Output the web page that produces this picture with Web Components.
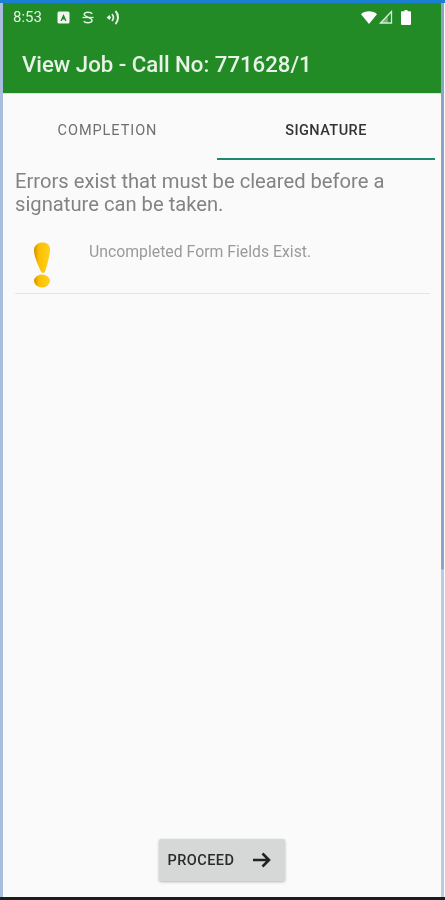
<!DOCTYPE html>
<html>
<head>
<meta charset="utf-8">
<title>View Job</title>
<style>
  html, body { margin: 0; height: 100%; background: #fafafa; }
  body { font-family: Roboto, "Liberation Sans", sans-serif; }
</style>
</head>
<body>
<job-screen>
  <status-bar slot="header" time="8:53"></status-bar>
  <app-bar slot="header" title="View Job - Call No: 771628/1"></app-bar>
  <tab-strip>
    <tab-item first>COMPLETION</tab-item>
    <tab-item active>SIGNATURE</tab-item>
  </tab-strip>
  <error-panel message="Errors exist that must be cleared before a signature can be taken.">
    <error-row>Uncompleted Form Fields Exist.</error-row>
  </error-panel>
  <proceed-button slot="footer">PROCEED</proceed-button>
</job-screen>

<script>
  class JobScreen extends HTMLElement {
    constructor() {
      super();
      this.attachShadow({mode: 'open'}).innerHTML = `
        <style>
          :host { display: flex; flex-direction: column; width: 445px; height: 900px; overflow: hidden; }
          .top { height: 3px; background: #1b7fd4; flex: none; }
          .frame { flex: 1 1 auto; display: flex; min-height: 0; }
          .left { width: 3px; background: #a9bedf; flex: none; }
          .right { width: 3px; margin-right: 1px; flex: none; background: linear-gradient(#8fa3c4 0, #8fa3c4 566px, #b9cbe6 567px); }
          main { flex: 1 1 auto; display: flex; flex-direction: column; min-width: 0; background: #fafafa; filter: blur(0.4px); }
          .body { flex: 1 1 auto; }
          .foot { display: flex; justify-content: center; padding: 0 1px 16px 0; }
          .bottom { height: 3px; background: #1c1c1c; flex: none; }
        </style>
        <div class="top"></div>
        <div class="frame">
          <div class="left"></div>
          <main>
            <slot name="header"></slot>
            <div class="body"><slot></slot></div>
            <div class="foot"><slot name="footer"></slot></div>
          </main>
          <div class="right"></div>
        </div>
        <div class="bottom"></div>`;
    }
  }

  class StatusBar extends HTMLElement {
    constructor() {
      super();
      this.attachShadow({mode: 'open'}).innerHTML = `
        <style>
          :host { display: flex; align-items: center; height: 31px; box-sizing: border-box; background: #228b26; color: #e6f2e6;
                  font-size: 15px; padding: 0 0 3px 10px; }
          svg { display: block; flex: none; }
          .time { width: 44px; }
          .spacer { flex: 1 1 auto; }
        </style>
        <span class="time"></span>
        <svg width="13" height="13" viewBox="0 0 13 13">
          <rect x="0.5" y="0.5" width="12" height="12" rx="1.5" fill="#f2f7f2"/>
          <path d="M6.5 3 L9.6 10 H8.1 L7.5 8.5 H5.5 L4.9 10 H3.4 Z" fill="#228b26"/>
        </svg>
        <svg width="12" height="15" viewBox="0 0 13 15" style="margin-left:12px">
          <path d="M11 3.6 C9.8 1.4 3 1 2.3 4 C1.8 6.5 10.8 7.6 10.9 10.6 C11 13.8 3.4 14 2 11.4" fill="none" stroke="#e6f2e6" stroke-width="1.6"/>
          <path d="M0.5 7.5 H12.5" stroke="#e6f2e6" stroke-width="1.4"/>
        </svg>
        <svg width="14" height="15" viewBox="0 0 14 15" style="margin-left:12px">
          <path d="M0.5 7.5 L3.5 5 L5 7.5 L3.5 10 Z" fill="#e6f2e6"/>
          <path d="M6 4 C7.6 6 7.6 9 6 11" fill="none" stroke="#e6f2e6" stroke-width="1.7"/>
          <path d="M9.5 1 C12.8 4.6 12.8 10.4 9.5 14" fill="none" stroke="#e6f2e6" stroke-width="2"/>
        </svg>
        <span class="spacer"></span>
        <svg width="16" height="13" viewBox="0 0 16 13">
          <path d="M0 3.2 C4 -0.6 12 -0.6 16 3.2 L8 13 Z" fill="#ffffff"/>
        </svg>
        <svg width="14" height="14" viewBox="0 0 14 14" style="margin-left:2px">
          <path d="M1.5 13 L12.5 1.5 V13 Z" fill="none" stroke="#dcebdc" stroke-width="1.3"/>
          <path d="M2 13 L8.8 6 V13 Z" fill="#dcebdc" opacity="0.45"/>
        </svg>
        <svg width="10" height="15" viewBox="0 0 10 15" style="margin:0 30px 0 8px">
          <path d="M3.5 0 H6.5 V1.2 H9 Q10 1.2 10 2.2 V14 Q10 15 9 15 H1 Q0 15 0 14 V2.2 Q0 1.2 1 1.2 H3.5 Z" fill="#ffffff"/>
        </svg>`;
      this.shadowRoot.querySelector('.time').textContent = this.getAttribute('time');
    }
  }

  class AppBar extends HTMLElement {
    constructor() {
      super();
      this.attachShadow({mode: 'open'}).innerHTML = `
        <style>
          :host { display: block; height: 60px; background: #228b26; border-bottom: 1px solid #d8e0d8; box-sizing: border-box;
                  color: #e8f3e8; font-size: 22.2px; font-weight: 500; line-height: 24px; padding: 18px 0 0 19px; }
        </style>
        <span></span>`;
      this.shadowRoot.querySelector('span').textContent = this.getAttribute('title');
      this.removeAttribute('title');
    }
  }

  class TabStrip extends HTMLElement {
    constructor() {
      super();
      this.attachShadow({mode: 'open'}).innerHTML = `
        <style>
          :host { display: grid; grid-template-columns: 214px 218px; height: 66px; }
        </style>
        <slot></slot>`;
    }
  }

  class TabItem extends HTMLElement {
    constructor() {
      super();
      this.attachShadow({mode: 'open'}).innerHTML = `
        <style>
          :host { display: flex; align-items: center; justify-content: center; box-sizing: border-box;
                  font-size: 14.5px; font-weight: 400; letter-spacing: 0.95px; color: #6f6f6f; padding-top: 8px;
                  border-bottom: 2px solid transparent; }
          :host([first]) { padding-right: 5px; }
          :host([active]) { color: #333; font-weight: 500; letter-spacing: 0.45px; border-bottom-color: #1c8a6e; }
        </style>
        <slot></slot>`;
    }
  }

  class ErrorPanel extends HTMLElement {
    constructor() {
      super();
      this.attachShadow({mode: 'open'}).innerHTML = `
        <style>
          :host { display: block; padding: 10px 11px 0 12px; }
          p { margin: 0 0 22px; font-size: 20.2px; line-height: 23px; color: #838383; }
        </style>
        <p></p>
        <slot></slot>`;
      this.shadowRoot.querySelector('p').textContent = this.getAttribute('message');
    }
  }

  class ErrorRow extends HTMLElement {
    constructor() {
      super();
      this.attachShadow({mode: 'open'}).innerHTML = `
        <style>
          :host { display: flex; align-items: flex-start; height: 56px; box-sizing: border-box;
                  border-bottom: 1px solid #e4e5e5; font-size: 15.8px; line-height: 18px; color: #9a9a9a; }
          svg { display: block; flex: none; margin: 4px 0 0 16px; }
          .label { margin: 5px 0 0 36px; }
        </style>
        <svg width="22" height="46" viewBox="0 0 22 46">
          <defs>
            <linearGradient id="g" x1="0" x2="1" y1="0" y2="0">
              <stop offset="0" stop-color="#d98e00"/>
              <stop offset="0.3" stop-color="#fbbf00"/>
              <stop offset="1" stop-color="#ffd21c"/>
            </linearGradient>
          </defs>
          <path d="M10.5 0.5 C16 0 19.6 3 19 8.5 C18.5 14.5 16 24 14 29.6 C13.3 31.4 10.8 31.4 10 29.6 C7.6 24 3.4 15.5 3 9 C2.7 4 6 1 10.5 0.5 Z" fill="url(#g)"/>
          <ellipse cx="11" cy="39" rx="8" ry="6.4" fill="url(#g)"/>
        </svg>
        <span class="label"><slot></slot></span>`;
    }
  }

  class ProceedButton extends HTMLElement {
    constructor() {
      super();
      this.attachShadow({mode: 'open'}).innerHTML = `
        <style>
          :host { display: flex; align-items: center; justify-content: space-between; box-sizing: border-box;
                  width: 126px; height: 42px; padding: 0 14px 0 9px; background: #d6d7d7; border-radius: 2px;
                  box-shadow: 0 1px 3px rgba(0,0,0,0.28); color: #2a2a2a; font-size: 14.5px; font-weight: 500; letter-spacing: 0.45px; }
          svg { display: block; flex: none; }
        </style>
        <slot></slot>
        <svg width="19" height="16" viewBox="0 0 19 16">
          <path d="M1 8 H17 M10.5 1.5 L17 8 L10.5 14.5" fill="none" stroke="#222" stroke-width="2.6"/>
        </svg>`;
    }
  }

  customElements.define('job-screen', JobScreen);
  customElements.define('status-bar', StatusBar);
  customElements.define('app-bar', AppBar);
  customElements.define('tab-strip', TabStrip);
  customElements.define('tab-item', TabItem);
  customElements.define('error-panel', ErrorPanel);
  customElements.define('error-row', ErrorRow);
  customElements.define('proceed-button', ProceedButton);
</script>
</body>
</html>
